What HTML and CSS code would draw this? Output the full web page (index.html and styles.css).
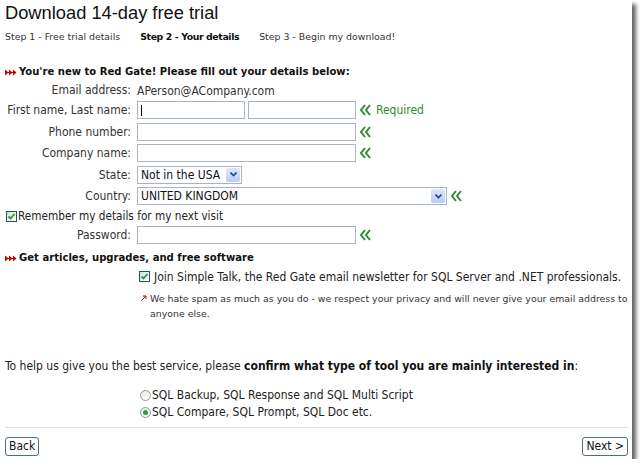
FILE: index.html
```html
<!DOCTYPE html>
<html lang="en">
<head>
<meta charset="UTF-8" />
<title>Download 14-day free trial</title>
<link rel="stylesheet" href="styles.css">
</head>
<body>

<div class="frame">
  <h1>Download 14-day free trial</h1>

  <div class="steps">
    <span class="step">Step 1 - Free trial details</span>
    <span class="step current">Step 2 - Your details</span>
    <span class="step">Step 3 - Begin my download!</span>
  </div>

  <h3 class="section first">
    <svg class="bullet" width="12" height="7" viewBox="0 0 12 7"><path d="M0 0.5L3.5 3.5L0 6.5ZM4 0.5L7.5 3.5L4 6.5ZM8 0.5L11.5 3.5L8 6.5Z" fill="#c00000"/><rect x="0" y="3" width="9" height="1" fill="#c00000"/></svg>
    You're new to Red Gate! Please fill out your details below:
  </h3>

  <div class="details">
    <label class="email-label">Email address:</label>
    <div class="field email"><span class="value">APerson@ACompany.com</span></div>

    <label>First name, Last name:</label>
    <div class="field">
      <span class="input short"><span class="caret"></span></span>
      <span class="input short"></span>
      <svg class="req" width="14" height="12" viewBox="0 0 14 12"><path d="M6 1L2 6L6 11M11 1L7 6L11 11" fill="none" stroke="#2e8b2e" stroke-width="2"/></svg>
      <span class="required">Required</span>
    </div>

    <label>Phone number:</label>
    <div class="field">
      <span class="input wide"></span>
      <svg class="req" width="14" height="12" viewBox="0 0 14 12"><path d="M6 1L2 6L6 11M11 1L7 6L11 11" fill="none" stroke="#2e8b2e" stroke-width="2"/></svg>
    </div>

    <label>Company name:</label>
    <div class="field">
      <span class="input wide"></span>
      <svg class="req" width="14" height="12" viewBox="0 0 14 12"><path d="M6 1L2 6L6 11M11 1L7 6L11 11" fill="none" stroke="#2e8b2e" stroke-width="2"/></svg>
    </div>

    <label>State:</label>
    <div class="field">
      <span class="select state">
        <span class="select-text">Not in the USA</span>
        <span class="drop"><svg width="7" height="5" viewBox="0 0 7 5"><path d="M0.5 0.5L3.5 3.5L6.5 0.5" fill="none" stroke="#24488c" stroke-width="1.6"/></svg></span>
      </span>
    </div>

    <label>Country:</label>
    <div class="field">
      <span class="select country">
        <span class="select-text">UNITED KINGDOM</span>
        <span class="drop"><svg width="7" height="5" viewBox="0 0 7 5"><path d="M0.5 0.5L3.5 3.5L6.5 0.5" fill="none" stroke="#24488c" stroke-width="1.6"/></svg></span>
      </span>
      <svg class="req" width="14" height="12" viewBox="0 0 14 12"><path d="M6 1L2 6L6 11M11 1L7 6L11 11" fill="none" stroke="#2e8b2e" stroke-width="2"/></svg>
    </div>

    <div class="remember">
      <span class="check"><svg width="9" height="9" viewBox="0 0 9 9"><path d="M1.5 4.5L3.5 6.5L7.5 2" fill="none" stroke="#21a121" stroke-width="1.8"/></svg></span>
      Remember my details for my next visit
    </div>

    <label>Password:</label>
    <div class="field">
      <span class="input wide"></span>
      <svg class="req" width="14" height="12" viewBox="0 0 14 12"><path d="M6 1L2 6L6 11M11 1L7 6L11 11" fill="none" stroke="#2e8b2e" stroke-width="2"/></svg>
    </div>
  </div>

  <h3 class="section">
    <svg class="bullet" width="12" height="7" viewBox="0 0 12 7"><path d="M0 0.5L3.5 3.5L0 6.5ZM4 0.5L7.5 3.5L4 6.5ZM8 0.5L11.5 3.5L8 6.5Z" fill="#c00000"/><rect x="0" y="3" width="9" height="1" fill="#c00000"/></svg>
    Get articles, upgrades, and free software
  </h3>

  <div class="newsletter">
    <div class="join">
      <span class="check"><svg width="9" height="9" viewBox="0 0 9 9"><path d="M1.5 4.5L3.5 6.5L7.5 2" fill="none" stroke="#21a121" stroke-width="1.8"/></svg></span>
      Join Simple Talk, the Red Gate email newsletter for SQL Server and .NET professionals.
    </div>
    <p class="spam">
      <svg class="spam-arrow" width="6" height="6" viewBox="0 0 6 6"><path d="M0.5 5.5L5 1M2 1H5V4" fill="none" stroke="#c00000" stroke-width="1"/></svg>
      <span>We hate spam as much as you do - we respect your privacy and will never give your email address to anyone else.</span>
    </p>
  </div>

  <p class="interest">To help us give you the best service, please <b>confirm what type of tool you are mainly interested in</b>:</p>

  <div class="tools">
    <div class="tool"><span class="radio"></span>SQL Backup, SQL Response and SQL Multi Script</div>
    <div class="tool"><span class="radio on"></span>SQL Compare, SQL Prompt, SQL Doc etc.</div>
  </div>

  <div class="buttons">
    <button type="button">Back</button>
    <button type="button">Next &gt;</button>
  </div>
</div>

</body>
</html>
```

FILE: styles.css
```css
body {
  margin: 0;
  background: #fff;
  font-family: Tahoma, "DejaVu Sans Condensed", "Liberation Sans", sans-serif;
  font-size: 12px;
  color: #222;
}
.frame {
  width: 632px;
  height: 459px;
  background: #fff;
  box-shadow: 4px 4px 4px rgba(0,0,0,0.6);
  box-sizing: border-box;
  padding: 0 0 0 5px;
}
h1 {
  margin: 0;
  padding-top: 1px;
  font-family: "Liberation Sans", Arial, sans-serif;
  font-weight: normal;
  font-size: 18.3px;
  line-height: 24px;
  color: #111;
}
.steps {
  margin-top: 5px;
  font-family: "DejaVu Sans", Verdana, sans-serif;
  font-size: 9.4px;
  line-height: 13px;
  color: #333;
  display: flex;
}
.step { margin-right: 20px; }
.step.current { font-weight: bold; color: #111; letter-spacing: -0.4px; }

.section {
  margin: 0;
  font-size: 11.2px;
  font-weight: bold;
  line-height: 16px;
  color: #111;
  display: flex;
  align-items: center;
  gap: 2px;
}
.section.first { margin-top: 21px; }
.bullet { margin-top: 1px; }

.details {
  display: grid;
  grid-template-columns: 126px auto;
  grid-template-rows: 21px repeat(5, 21.5px) 17.5px 21.5px;
  column-gap: 6px;
  align-items: start;
  margin-top: 0;
}
.details label {
  text-align: right;
  line-height: 18px;
  color: #333;
}
.details .email-label { line-height: 21px; }
.field {
  display: flex;
  align-items: center;
  gap: 3px;
  height: 18px;
}
.field.email { height: 21px; }
.value { color: #333; }
.input {
  display: inline-block;
  height: 18px;
  border: 1px solid #a8b4c2;
  box-sizing: border-box;
  background: #fff;
  position: relative;
}
.input.short { width: 108px; }
.input.wide { width: 219px; }
.caret {
  position: absolute;
  left: 3px;
  top: 3px;
  width: 1px;
  height: 11px;
  background: #000;
}
.req { margin-left: 0; }
.required { color: #2e8b2e; }

.select {
  display: flex;
  align-items: center;
  height: 18px;
  border: 1px solid #a8b4c2;
  box-sizing: border-box;
  color: #111;
}
.select.state { width: 105px; }
.select.country { width: 310px; }
.select-text { flex: 1; padding-left: 3px; }
.drop {
  width: 14px;
  height: 14px;
  margin-right: 1px;
  background: linear-gradient(#dbe6fb, #b8cdf5);
  border-radius: 2px;
  display: flex;
  align-items: center;
  justify-content: center;
}

.check {
  display: inline-flex;
  align-items: center;
  justify-content: center;
  width: 11px;
  height: 11px;
  border: 1px solid #1c5180;
  box-sizing: border-box;
  background: linear-gradient(135deg, #dcdcd6, #fff);
}
.remember {
  grid-column: 1 / 3;
  display: flex;
  align-items: center;
  padding-left: 1px;
  gap: 1px;
  font-size: 11.7px;
  color: #222;
  line-height: 15px;
}

.details + .section { margin-top: 2px; }

.newsletter { padding-left: 134px; }
.join {
  display: flex;
  align-items: center;
  gap: 4px;
  margin-top: 2px;
  line-height: 18px;
  color: #222;
}
.spam {
  margin: 5px 0 0;
  display: flex;
  gap: 3px;
  font-family: "DejaVu Sans", Verdana, sans-serif;
  font-size: 9.4px;
  line-height: 15px;
  color: #333;
}
.spam-arrow { flex: none; margin-top: 4px; margin-left: 2px; }

.interest {
  margin: 36px 0 0;
  line-height: 18px;
  color: #222;
}
.interest b { color: #111; }

.tools { padding-left: 135px; margin-top: 12px; }
.tool {
  display: flex;
  align-items: center;
  line-height: 17px;
  color: #222;
}
.radio {
  width: 11px;
  height: 11px;
  border: 1px solid #8c99a8;
  border-radius: 50%;
  box-sizing: border-box;
  background: linear-gradient(135deg, #e6e6e0, #fff);
  margin-right: 1px;
  display: inline-flex;
  align-items: center;
  justify-content: center;
}
.radio.on::after {
  content: "";
  width: 5px;
  height: 5px;
  border-radius: 50%;
  background: #2fa12f;
}

.buttons {
  margin: 6px 4px 0 0;
  border-top: 1px solid #dde3e8;
  padding-top: 9px;
  display: flex;
  justify-content: space-between;
}
button {
  font-family: inherit;
  font-size: 12px;
  color: #111;
  background: #fff;
  border: 1px solid #4e6b8a;
  border-radius: 3px;
  height: 19px;
  padding: 0 3px;
  line-height: 15px;
}
```
